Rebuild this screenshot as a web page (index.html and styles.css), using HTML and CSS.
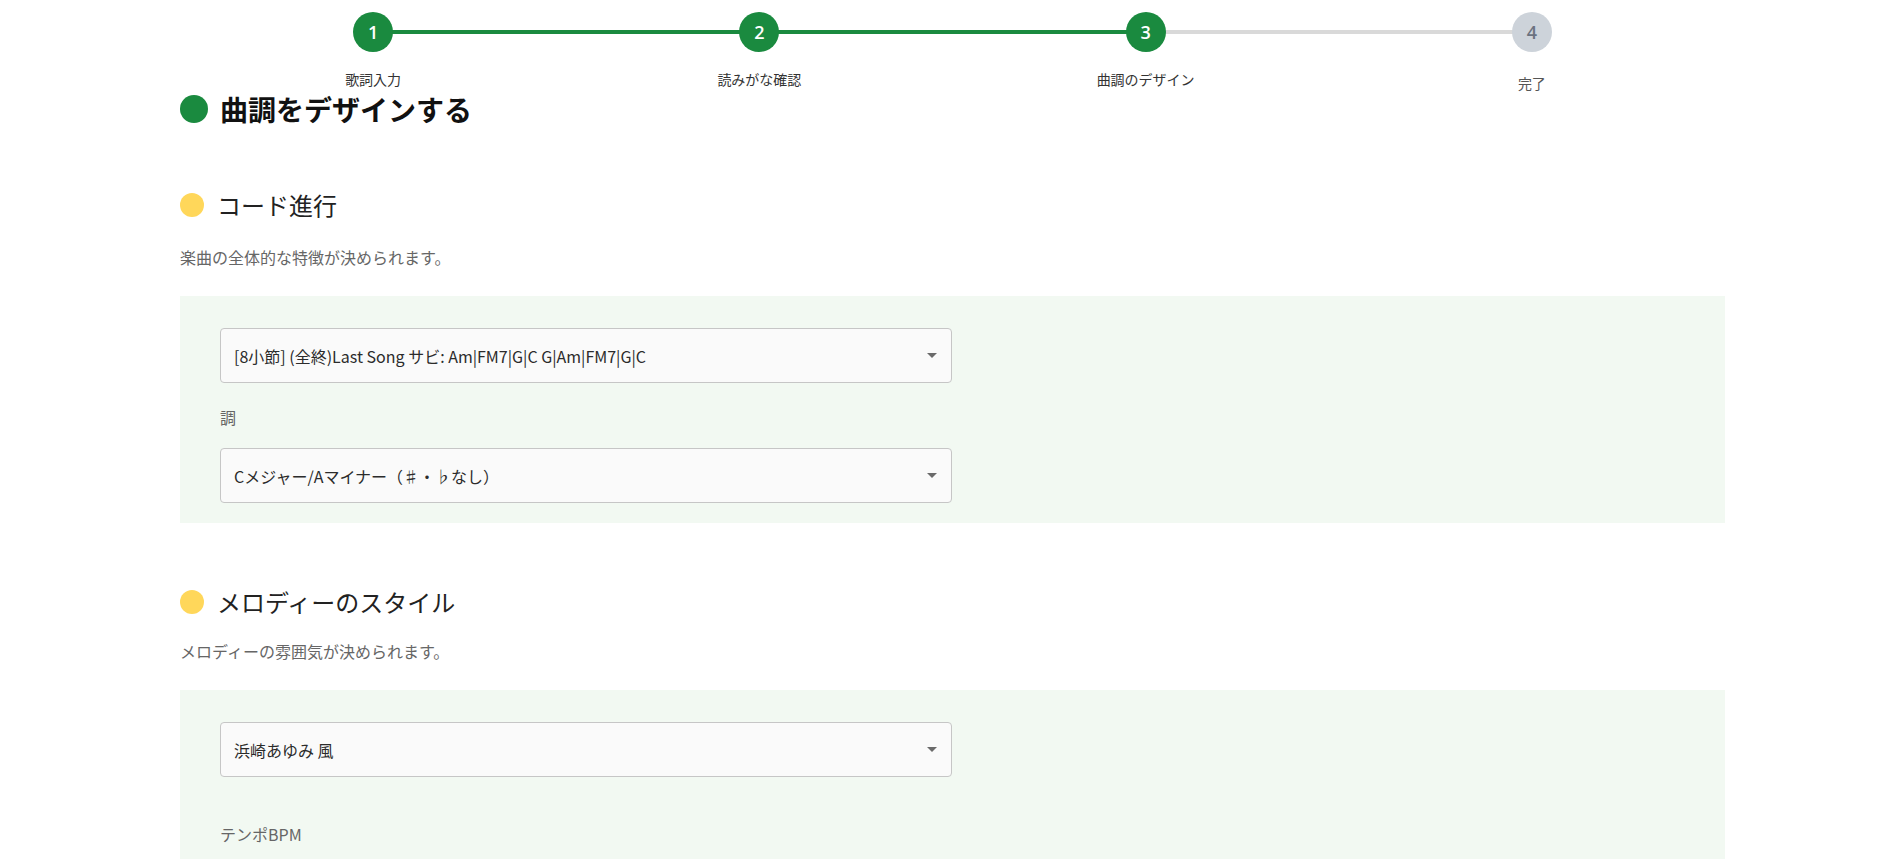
FILE: index.html
```html
<!DOCTYPE html>
<html lang="ja">
<head>
<meta charset="utf-8">
<title>曲調をデザインする</title>
<link rel="stylesheet" href="styles.css">
</head>
<body>
<div class="container">
  <ol class="stepper">
    <li class="step done"><span class="step-num">1</span><span class="step-label">歌詞入力</span></li>
    <li class="step done"><span class="step-num">2</span><span class="step-label">読みがな確認</span></li>
    <li class="step done current"><span class="step-num">3</span><span class="step-label">曲調のデザイン</span></li>
    <li class="step todo"><span class="step-num">4</span><span class="step-label">完了</span></li>
  </ol>

  <h1 class="page-title"><span class="dot dot-green"></span>曲調をデザインする</h1>

  <section class="section section-chords">
    <h2 class="section-title"><span class="dot dot-yellow"></span>コード進行</h2>
    <p class="section-desc">楽曲の全体的な特徴が決められます。</p>
    <div class="panel">
      <div class="select"><span class="select-value">[8小節] (全終)Last Song サビ: Am|FM7|G|C G|Am|FM7|G|C</span><span class="select-arrow"></span></div>
      <div class="field-label">調</div>
      <div class="select"><span class="select-value">Cメジャー/Aマイナー（♯・♭なし）</span><span class="select-arrow"></span></div>
    </div>
  </section>

  <section class="section section-melody">
    <h2 class="section-title"><span class="dot dot-yellow"></span>メロディーのスタイル</h2>
    <p class="section-desc">メロディーの雰囲気が決められます。</p>
    <div class="panel">
      <div class="select"><span class="select-value">浜崎あゆみ 風</span><span class="select-arrow"></span></div>
      <div class="field-label field-label-far">テンポBPM</div>
    </div>
  </section>
</div>
</body>
</html>
```

FILE: styles.css
```css
* { box-sizing: border-box; }
html, body { margin: 0; padding: 0; background: #ffffff; }
body {
  font-family: "Noto Sans CJK JP", "Noto Sans", sans-serif;
  color: #222;
  overflow: hidden;
  height: 859px;
}
.container {
  margin-left: 180px;
  width: 1545px;
}

/* stepper */
.stepper {
  list-style: none;
  margin: 0;
  padding: 12px 0 0;
  display: grid;
  grid-template-columns: repeat(4, 1fr);
}
.step {
  position: relative;
  display: flex;
  flex-direction: column;
  align-items: center;
}
.step + .step::before {
  content: "";
  position: absolute;
  top: 18px;
  left: -50%;
  width: 100%;
  height: 4px;
  background: #1a8a3f;
  z-index: 0;
}
.step.todo::before { background: #d9d9d9; }
.step-num {
  position: relative;
  z-index: 1;
  width: 40px;
  height: 40px;
  border-radius: 50%;
  background: #1a8a3f;
  color: #fff;
  font-family: "Open Sans", "Noto Sans", sans-serif;
  font-size: 18px;
  font-weight: 600;
  display: flex;
  align-items: center;
  justify-content: center;
}
.step.todo .step-num {
  background: #cdd3da;
  color: #6b7280;
}
.step-label {
  margin-top: 17px;
  font-size: 14px;
  line-height: 20px;
  color: #333;
}
.step.todo .step-label {
  margin-top: 21px;
  color: #555;
}

/* titles */
.dot {
  display: inline-block;
  border-radius: 50%;
  flex: none;
}
.dot-green { width: 28px; height: 28px; background: #1a8a3f; }
.dot-yellow { width: 24px; height: 24px; background: #ffd75a; }

.page-title {
  margin: 0;
  display: flex;
  align-items: center;
  gap: 12px;
  font-size: 28px;
  line-height: 32px;
  font-weight: 700;
  color: #111;
}
.section-title {
  margin: 63px 0 0;
  display: flex;
  align-items: center;
  gap: 13px;
  font-size: 24px;
  line-height: 34px;
  font-weight: 400;
  color: #222;
}
.section-melody .section-title { margin-top: 62px; }
.section-desc {
  margin: 23px 0 0;
  font-size: 16px;
  line-height: 24px;
  color: #666;
}
.section-melody .section-desc { margin-top: 20px; }

/* panel */
.panel {
  margin-top: 27px;
  background: #f2f9f2;
  padding: 32px 40px 20px;
}
.section-chords .panel { margin-top: 27px; }
.select {
  width: 732px;
  height: 55px;
  border: 1px solid #c6c6c6;
  border-radius: 4px;
  background: #fafafa;
  display: flex;
  align-items: center;
  justify-content: space-between;
  padding: 0 14px 0 13px;
}
.select-value {
  font-size: 16px;
  color: #2b2b2b;
  white-space: nowrap;
}
.select-arrow {
  width: 0;
  height: 0;
  border-left: 5px solid transparent;
  border-right: 5px solid transparent;
  border-top: 5px solid #6a6a6a;
}
.field-label {
  margin: 24px 0 21px;
  font-size: 16px;
  line-height: 20px;
  color: #666;
}
.field-label-far {
  margin-top: 47px;
}
```
